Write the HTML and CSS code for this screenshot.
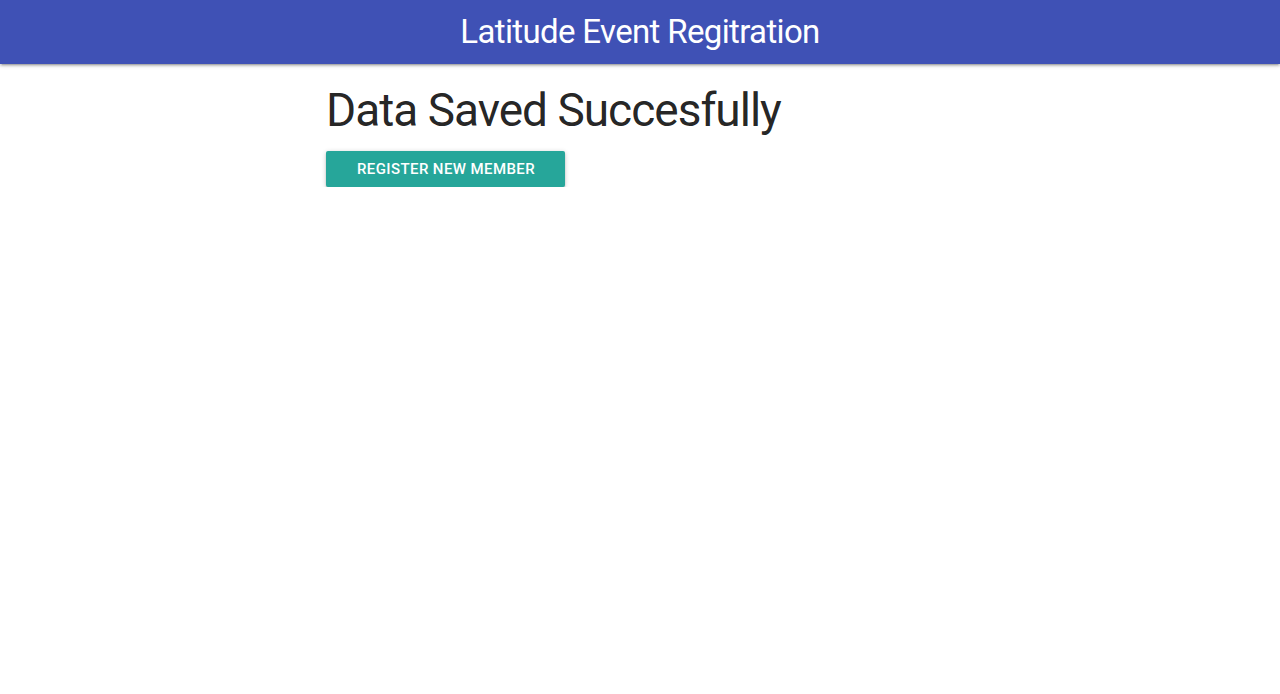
FILE: index.html
```html
<!DOCTYPE html>
<html>
<head>
<meta charset="utf-8">
<link rel="stylesheet" href="styles.css">
</head>
<body>
<nav class="navbar">
  <span class="brand">Latitude Event Regitration</span>
</nav>
<main class="container">
  <h3 class="title">Data Saved Succesfully</h3>
  <button class="btn">Register New Member</button>
</main>
</body>
</html>
```

FILE: styles.css
```css
html, body {
  margin: 0;
  padding: 0;
  background: #fff;
  font-family: Roboto, "Liberation Sans", sans-serif;
}
.navbar {
  height: 64px;
  background: #3f51b5;
  display: flex;
  justify-content: center;
  align-items: center;
  box-shadow: 0 2px 2px 0 rgba(0,0,0,.14), 0 3px 1px -2px rgba(0,0,0,.12), 0 1px 5px 0 rgba(0,0,0,.2);
  position: relative;
  z-index: 1;
}
.brand {
  color: #fff;
  font-size: 33px;
  letter-spacing: -0.65px;
  line-height: 64px;
}
.container {
  width: 628px;
  margin: 0 auto;
}
.title {
  font-size: 46px;
  font-weight: 400;
  letter-spacing: -1.0px;
  line-height: 51px;
  margin: 21px 0 15px 0;
  color: rgba(0,0,0,.87);
}
.btn {
  display: inline-block;
  height: 36px;
  line-height: 36px;
  padding: 0 30px 0 31px;
  border: none;
  border-radius: 2px;
  background: #26a69a;
  color: #fff;
  font-family: Roboto, "Liberation Sans", sans-serif;
  font-size: 15px;
  font-weight: 500;
  letter-spacing: .4px;
  text-transform: uppercase;
  box-shadow: 0 2px 2px 0 rgba(0,0,0,.14), 0 3px 1px -2px rgba(0,0,0,.12), 0 1px 5px 0 rgba(0,0,0,.2);
  cursor: pointer;
}
```
